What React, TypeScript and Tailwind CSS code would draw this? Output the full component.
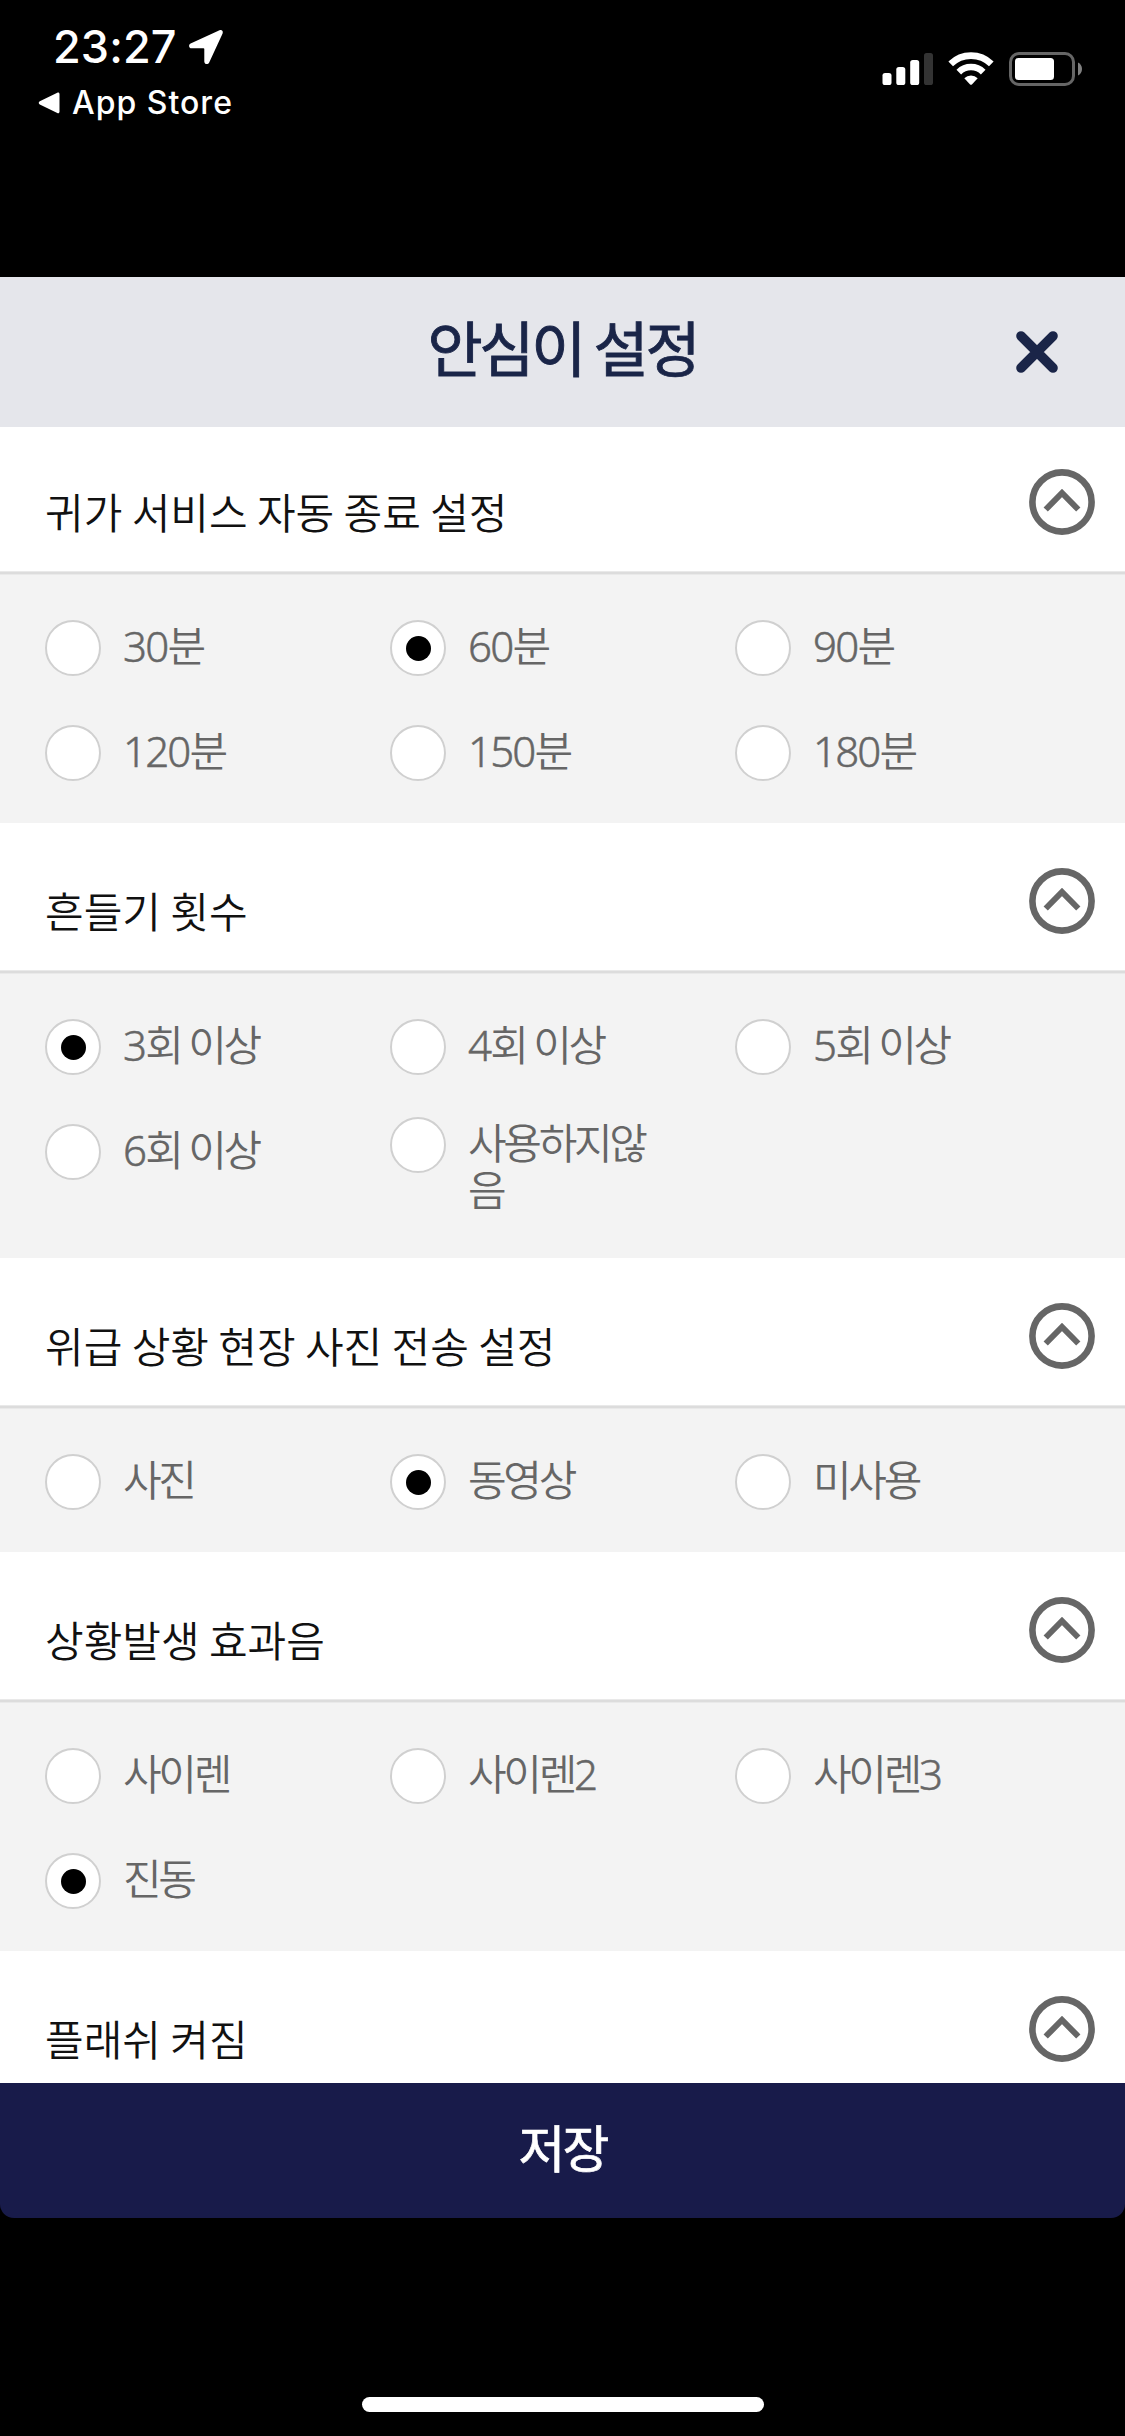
import { useState } from 'react';
import clsx from 'clsx';

type Section = {
  id: string;
  title: string;
  options: string[];
  initial: number;
};

const SECTIONS: Section[] = [
  {
    id: 'auto-end',
    title: '귀가 서비스 자동 종료 설정',
    options: ['30분', '60분', '90분', '120분', '150분', '180분'],
    initial: 1,
  },
  {
    id: 'shake',
    title: '흔들기 횟수',
    options: ['3회 이상', '4회 이상', '5회 이상', '6회 이상', '사용하지않음'],
    initial: 0,
  },
  {
    id: 'capture',
    title: '위급 상황 현장 사진 전송 설정',
    options: ['사진', '동영상', '미사용'],
    initial: 1,
  },
  {
    id: 'sound',
    title: '상황발생 효과음',
    options: ['사이렌', '사이렌2', '사이렌3', '진동'],
    initial: 3,
  },
  { id: 'flash', title: '플래쉬 켜짐', options: [], initial: 0 },
];

function StatusBar() {
  return (
    <div className="flex h-[277px] shrink-0 items-start justify-between bg-black pr-[42px] pl-[38px] font-['Inter','Liberation_Sans',sans-serif] text-white">
      <div className="pt-[20px]">
        <div className="flex h-[54px] items-center pl-[15px]">
          <span className="text-[45px] leading-[54px] font-[550] tracking-[0.1px]">23:27</span>
          <svg className="ml-[11px] h-[36px] w-[36px]" viewBox="0 0 36 36" fill="currentColor">
            <path d="M31.5 1.3 2.6 14.5C0.2 15.7 0.8 19.3 3.4 19.3H15.5C16 19.3 16.3 19.6 16.3 20.1V32.4C16.3 35.3 20 36 21.2 33.4L34.6 4.4C35.5 2.3 33.7 0.3 31.5 1.3Z" />
          </svg>
        </div>
        <div className="flex h-[40px] items-center pt-[17px]">
          <svg className="h-[22px] w-[22px]" viewBox="0 0 22 22" fill="currentColor">
            <path d="M19.3 0.8 1.8 9.3C0.4 10 0.4 11.8 1.8 12.5L19.3 21.1C20.5 21.7 21.5 21 21.5 19.8V2.1C21.5 0.9 20.5 0.2 19.3 0.8Z" />
          </svg>
          <span className="ml-[12px] text-[32px] leading-[40px] font-[450] tracking-[1px]">App Store</span>
        </div>
      </div>

      <div className="flex items-center pt-[51px]">
        <svg className="h-[36px] w-[52px]" viewBox="0 0 52 36" fill="currentColor">
          <rect x="0.5" y="22" width="9" height="12" rx="2.6" />
          <rect x="14.3" y="16" width="9" height="18" rx="2.6" />
          <rect x="28.2" y="9" width="9" height="25" rx="2.6" />
          <rect x="42" y="2" width="9" height="32" rx="2.6" fill="#333333" />
        </svg>
        <svg className="ml-[14px] h-[36px] w-[46px]" viewBox="0 0 46 36" fill="none" stroke="currentColor" strokeWidth="6.6">
          <path d="M2.7 12.9A29 29 0 0 1 43.3 12.9" />
          <path d="M10.8 21.1A17.3 17.3 0 0 1 35.2 21.1" />
          <path d="M16.3 27.2A9.7 9.7 0 0 1 29.7 27.2L23.9 33.4Q23 34.3 22.1 33.4Z" fill="currentColor" stroke="none" />
        </svg>
        <svg className="ml-[15px] h-[36px] w-[74px]" viewBox="0 0 74 36" fill="none">
          <rect x="1.5" y="2.5" width="63" height="31" rx="8.5" stroke="#666666" strokeWidth="3" />
          <rect x="6" y="7" width="39" height="22" rx="3.5" fill="#ffffff" />
          <path d="M69 11.5C71.3 12.6 73 15 73 18C73 21 71.3 23.4 69 24.5Z" fill="#808080" />
        </svg>
      </div>
    </div>
  );
}

function Radio({ checked }: { checked: boolean }) {
  return (
    <span className="flex h-[56px] w-[56px] shrink-0 items-center justify-center rounded-full border-2 border-[#d0d0d0] bg-white">
      {checked && <span className="h-[25px] w-[25px] rounded-full bg-black" />}
    </span>
  );
}

function CollapseIcon() {
  return (
    <svg className="h-[66px] w-[66px]" viewBox="0 0 66 66" fill="none" stroke="#666666">
      <circle cx="33" cy="33" r="29.6" strokeWidth="6.6" />
      <path d="M16.7 40.5 33 24 49.3 40.5" strokeWidth="6" />
    </svg>
  );
}

// Digits are set a little looser than the Hangul around them
function OptionLabel({ text }: { text: string }) {
  return (
    <span className="ml-[22px] max-w-[190px] pt-[2px] font-['Noto_Sans','Noto_Sans_CJK_KR',sans-serif] text-[42px] leading-[47px] font-[350] tracking-[-3.3px] text-[#666666]">
      {text.split(/(\d+)/).map((part, i) =>
        /\d/.test(part) ? (
          <span key={i} className="tracking-[-1.8px] [-webkit-text-stroke:0.5px]">
            {part}
          </span>
        ) : (
          part
        ),
      )}
    </span>
  );
}

function SettingSection({ section, first }: { section: Section; first: boolean }) {
  const [selected, setSelected] = useState(section.initial);

  return (
    <section className="shrink-0">
      <div className={clsx('flex items-end justify-between bg-white pr-[30px] pl-[45px]', first ? 'h-[144px]' : 'h-[147px]')}>
        <h2 className="pb-[37px] text-[42px] leading-[47px] font-[350] text-[#111111]">{section.title}</h2>
        <button className="pb-[36px]">
          <CollapseIcon />
        </button>
      </div>
      <div className="h-1 border-y border-[#e9e9e9] bg-[#dcdcdc]" />
      {section.options.length > 0 && (
        <div className="grid grid-cols-3 gap-y-[48px] bg-[#f3f3f3] px-[45px] pt-[45px] pb-[41px]">
          {section.options.map((option, i) => {
            const wraps = option.length > 5;
            return (
              <button
                key={option}
                className={clsx('flex min-h-[57px] items-start text-left', wraps && '-mt-[7px] pb-[4px]')}
                onClick={() => setSelected(i)}
              >
                <Radio checked={selected === i} />
                <OptionLabel text={option} />
              </button>
            );
          })}
        </div>
      )}
    </section>
  );
}

export default function App() {
  return (
    <div className="flex h-[2436px] w-[1125px] flex-col overflow-hidden bg-black font-['Noto_Sans_CJK_KR',sans-serif]">
      <StatusBar />

      <header className="grid h-[150px] shrink-0 grid-cols-[1fr_auto_1fr] items-center bg-[#e5e6eb] text-[#1a2548]">
        <h1 className="col-start-2 pb-[12px] text-[60px] leading-[60px] font-normal tracking-[-3.2px] [-webkit-text-stroke:0.9px]">
          안심이 설정
        </h1>
        <button className="mr-[66px] justify-self-end">
          <svg className="h-[44px] w-[44px]" viewBox="0 0 44 44" fill="none" stroke="currentColor" strokeWidth="9.6" strokeLinecap="round">
            <path d="M6 6 38 38M38 6 6 38" />
          </svg>
        </button>
      </header>

      <main className="flex h-[1656px] shrink-0 flex-col overflow-hidden bg-white">
        {SECTIONS.map((section, i) => (
          <SettingSection key={section.id} section={section} first={i === 0} />
        ))}
      </main>

      <button className="flex h-[135px] shrink-0 items-center justify-center rounded-b-[14px] bg-[#181b4a] pb-[9px] text-[51px] leading-[51px] font-normal tracking-[-3px] text-white [-webkit-text-stroke:0.7px]">
        저장
      </button>

      <div className="mt-auto mb-[24px] h-[15px] w-[402px] shrink-0 self-center rounded-full bg-white" />
    </div>
  );
}
